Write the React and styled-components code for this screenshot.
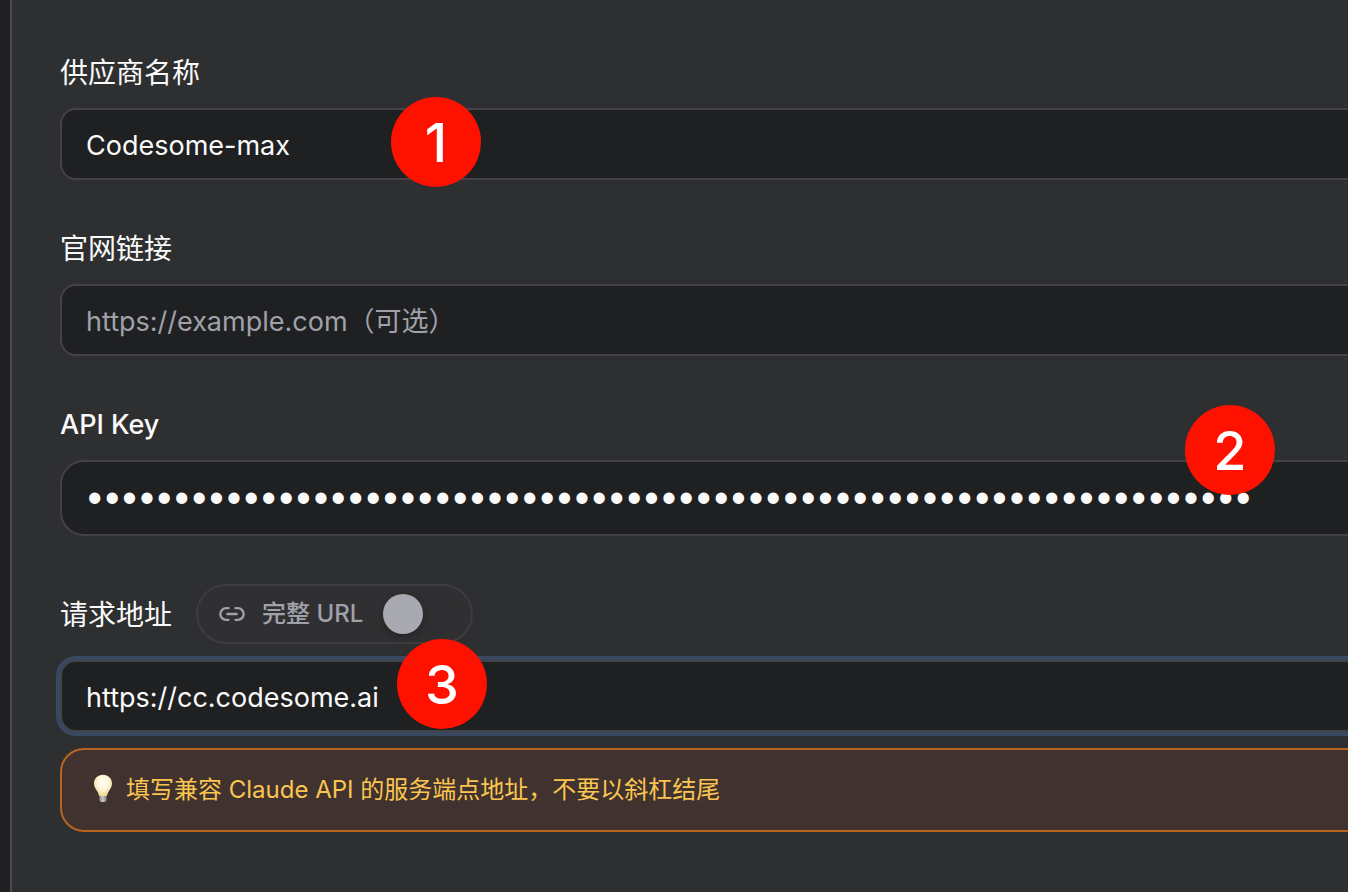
import { useState } from "react";
import styled, { createGlobalStyle } from "styled-components";
import { Link2 } from "lucide-react";

const GlobalStyle = createGlobalStyle`
    * {
        box-sizing:border-box;
    }
    body {
        margin:0;
        background-color:#2e2f31;
        color:#fafafa;
        font-family:Inter, "Noto Sans CJK SC", sans-serif;
        font-size:27px;
    }
    input {
        font:inherit;
        color:inherit;
    }
`
const Page = styled.div`
    display:flex;
    min-height:100vh;
    overflow:hidden;
`
const Rail = styled.div`
    width:12px;
    flex:none;
    background-color:#1f2022;
    border-right:2px solid #4b4b4d;
`
const Form = styled.form`
    flex:1;
    min-width:0;
    display:flex;
    flex-direction:column;
    gap:48px;
    padding:52px 0 48px 48px;
`
const Field = styled.div`
    display:flex;
    flex-direction:column;
    gap:16px;
`
const LabelRow = styled.div`
    display:flex;
    align-items:center;
    gap:24px;
`
const Label = styled.label`
    padding-top:2px;
    line-height:38px;
    font-weight:500;
`
const CjkLabel = styled(Label)`
    font-size:28px;
    font-weight:400;
`
const InputWrap = styled.div`
    position:relative;
    display:flex;
`
const TextInput = styled.input`
    flex:1;
    min-width:0;
    height:72px;
    padding:2px 24px 0;
    color:#fafafa;
    background-color:#1f2022;
    border:2px solid #424248;
    border-right:0;
    border-radius:16px 0 0 16px;
    box-shadow:${({ $ring }) => ($ring ? "0 0 0 4px #374860" : "none")};
    outline:none;

    &::placeholder {
        color:#a1a1aa;
        opacity:1;
    }
`
const KeyInput = styled(TextInput)`
    height:76px;
    padding:0 24px 6px;
    border-radius:24px 0 0 24px;
    font-family:Lato, sans-serif;
    font-size:30px;
`
const Marker = styled.span`
    position:absolute;
    left:${({ $left }) => $left}px;
    top:${({ $top }) => $top}px;
    width:90px;
    height:90px;
    border-radius:50%;
    display:flex;
    align-items:center;
    justify-content:center;
    background-color:#ff1100;
    color:#fff;
    font-size:54px;
    font-weight:500;
    pointer-events:none;
`
const UrlToggle = styled.label`
    display:flex;
    align-items:center;
    gap:16px;
    height:60px;
    padding:0 20px;
    border:2px solid #3d3d40;
    border-radius:30px;
    background-color:#303032;
    color:#a1a1aa;
    font-size:24px;
    font-weight:500;
    line-height:28px;
`
const Switch = styled.input`
    appearance:none;
    width:72px;
    height:44px;
    margin:0;
    padding:2px 4px;
    display:flex;
    border-radius:22px;
    background-color:#2f2f31;

    &::before {
        content:"";
        width:40px;
        height:40px;
        border-radius:50%;
        background-color:#a9a9b2;
        box-shadow:0 4px 8px rgba(0,0,0,0.2);
    }
    &:checked {
        justify-content:flex-end;
    }
`
const Hint = styled.div`
    display:flex;
    align-items:center;
    gap:8px;
    height:84px;
    padding:0 24px;
    border:2px solid #b96420;
    border-right:0;
    border-radius:24px 0 0 24px;
    background-color:#40322e;
    color:#fbc550;
    font-size:24px;

    p {
        margin:0;
        line-height:32px;
    }
`

const Bulb = () => {
    return (
        <svg width="32" height="32" viewBox="0 0 32 32" aria-hidden="true">
            <defs>
                <radialGradient id="glass" cx="0.5" cy="0.38" r="0.62">
                    <stop offset="0" stopColor="#fffefa" />
                    <stop offset="0.5" stopColor="#fff5d8" />
                    <stop offset="1" stopColor="#edd693" />
                </radialGradient>
                <linearGradient id="cap" x1="0" x2="1" y1="0" y2="0">
                    <stop offset="0" stopColor="#85837f" />
                    <stop offset="0.45" stopColor="#d8d7d3" />
                    <stop offset="1" stopColor="#777572" />
                </linearGradient>
            </defs>
            <path d="M13.5 21h7v5.2q0 1.8-3.5 1.8t-3.5-1.8z" fill="url(#cap)" />
            <path d="M13.5 23.8h7M13.5 25.8h7" stroke="#a3a19d" strokeWidth="0.6" />
            <path
                d="M17 .8c-5.2 0-9 3.8-9 8.8 0 3.4 1.7 5.4 3.2 7.7 1.1 1.7 1.4 3 1.9 4.8h7.8c.5-1.8.8-3.1 1.9-4.8 1.5-2.3 3.2-4.3 3.2-7.7 0-5-3.8-8.8-9-8.8z"
                fill="url(#glass)"
            />
        </svg>
    );
}

const App = () => {
    const [name, setName] = useState("Codesome-max");
    const [site, setSite] = useState("");
    const [apiKey, setApiKey] = useState("k".repeat(67));
    const [url, setUrl] = useState("https://cc.codesome.ai");
    const [fullUrl, setFullUrl] = useState(false);

    return (
        <Page>
            <GlobalStyle />
            <Rail />
            <Form>
                <Field>
                    <CjkLabel htmlFor="name">供应商名称</CjkLabel>
                    <InputWrap>
                        <TextInput id="name" value={name} onChange={(e) => setName(e.target.value)} />
                        <Marker $left={331} $top={-11}>1</Marker>
                    </InputWrap>
                </Field>
                <Field>
                    <CjkLabel htmlFor="site">官网链接</CjkLabel>
                    <InputWrap>
                        <TextInput
                            id="site"
                            placeholder="https://example.com（可选）"
                            value={site}
                            onChange={(e) => setSite(e.target.value)}
                        />
                    </InputWrap>
                </Field>
                <Field>
                    <Label htmlFor="apiKey">API Key</Label>
                    <InputWrap>
                        <KeyInput
                            id="apiKey"
                            type="password"
                            autoComplete="off"
                            value={apiKey}
                            onChange={(e) => setApiKey(e.target.value)}
                        />
                        <Marker $left={1125} $top={-55}>2</Marker>
                    </InputWrap>
                </Field>
                <Field>
                    <LabelRow>
                        <CjkLabel htmlFor="url">请求地址</CjkLabel>
                        <UrlToggle>
                            <Link2 size={28} />
                            完整 URL
                            <Switch
                                type="checkbox"
                                role="switch"
                                checked={fullUrl}
                                onChange={(e) => setFullUrl(e.target.checked)}
                            />
                        </UrlToggle>
                    </LabelRow>
                    <InputWrap>
                        <TextInput id="url" $ring value={url} onChange={(e) => setUrl(e.target.value)} />
                        <Marker $left={337} $top={-21}>3</Marker>
                    </InputWrap>
                    <Hint>
                        <Bulb />
                        <p>填写兼容 Claude API 的服务端点地址，不要以斜杠结尾</p>
                    </Hint>
                </Field>
            </Form>
        </Page>
    );
}

export default App;
